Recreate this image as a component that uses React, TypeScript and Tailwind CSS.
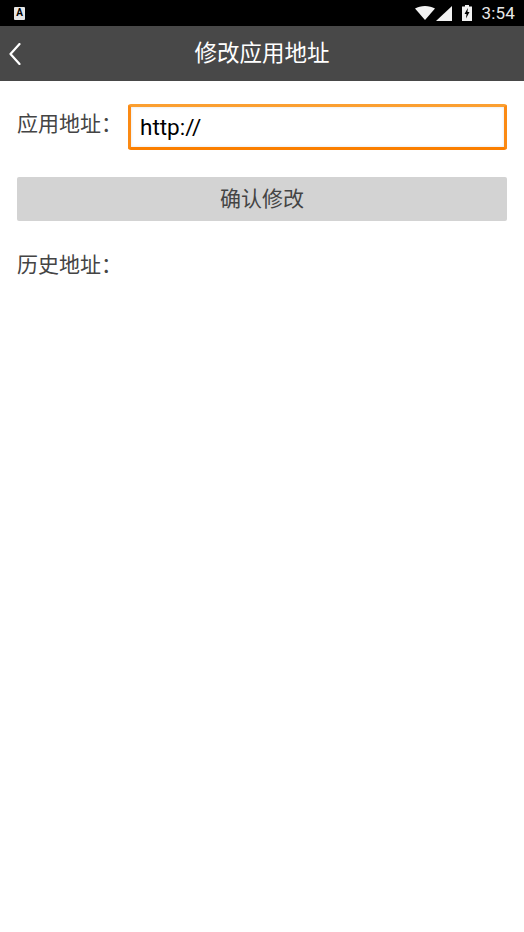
const cjk = "font-['Roboto','Noto_Sans_CJK_SC',sans-serif]"

function StatusBar() {
  return (
    <div className="flex h-[26px] items-center bg-black pr-[9px] pl-[14px] text-[#e8e8e8]">
      {/* Notification icon */}
      <div className="flex h-[13px] w-[11px] items-start justify-center rounded-[1px] bg-[#e6e6e6] font-['Roboto',sans-serif] text-[10px] leading-[11px] font-bold text-black">
        A
      </div>

      <div className="ml-auto flex items-center">
        {/* Wifi */}
        <svg width="20" height="14" viewBox="0 0 20 14" className="fill-[#f2f2f2]">
          <path d="M0 2.5C2.800.9 6.200 0 10 0s7.200.9 10 2.500L10 14z" />
        </svg>
        {/* Signal */}
        <svg width="16" height="15" viewBox="0 0 16 15" className="ml-[1px] fill-[#f2f2f2]">
          <path d="M16 0v15H0z" />
        </svg>
        {/* Battery */}
        <svg width="10" height="16" viewBox="0 0 10 16" className="ml-[10px]">
          <path d="M3 0h4v1.500h3V16H0V1.500h3z" fill="#f2f2f2" />
          <path d="M5.800 3 2.500 9h2l-.5 4.500L7.500 7h-2z" fill="#000" />
        </svg>
        <span className="ml-[9px] font-['Roboto',sans-serif] text-[17px] leading-none tracking-[0.2px]">3:54</span>
      </div>
    </div>
  )
}

export default function App() {
  return (
    <div className={`flex min-h-[932px] flex-col bg-white ${cjk}`}>
      <StatusBar />

      {/* Title bar */}
      <div className="relative flex h-[55px] items-center justify-center bg-[#484848]">
        <svg width="12" height="22" viewBox="0 0 12 22" fill="none" className="absolute top-[17px] left-[9px] stroke-white">
          <path d="M10.500 1 1.500 11l9 10" strokeWidth="2.200" strokeLinecap="round" strokeLinejoin="round" />
        </svg>
        <span className="text-[22.5px] text-white">修改应用地址</span>
      </div>

      <div className="flex flex-col px-[17px] pt-[23px]">
        {/* Address row */}
        <div className="flex items-center">
          <label className="mb-[5px] w-[111px] text-[21px] leading-none text-[#444]">应用地址：</label>
          <input
            type="text"
            defaultValue="http://"
            className="h-[46px] flex-1 rounded-[3px] border-[3px] border-[#fb8a14] border-t-[#fb9f30] border-b-[#fb7f00] bg-white px-[9px] font-['Roboto',sans-serif] text-[22.5px] text-black shadow-[inset_0_0_3px_rgba(0,0,0,0.12)] outline-none"
          />
        </div>

        <button
          type="button"
          className="mt-[27px] h-[44px] w-full rounded-[2px] bg-[#d3d3d3] pt-[1px] text-[21px] text-[#444]"
        >
          确认修改
        </button>

        <div className="mt-[34px] text-[21px] leading-none text-[#444]">历史地址：</div>
      </div>
    </div>
  )
}
